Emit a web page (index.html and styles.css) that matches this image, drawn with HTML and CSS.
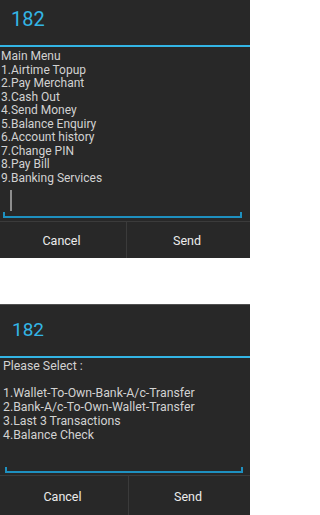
FILE: index.html
```html
<!DOCTYPE html>
<html>
<head>
<meta charset="utf-8">
<link rel="stylesheet" href="styles.css">
</head>
<body>
<div class="page">
  <section class="dialog dialog-main">
    <div class="title">182</div>
    <div class="title-rule"></div>
    <div class="message">
      <div>Main Menu</div>
      <div>1.Airtime Topup</div>
      <div>2.Pay Merchant</div>
      <div>3.Cash Out</div>
      <div>4.Send Money</div>
      <div>5.Balance Enquiry</div>
      <div>6.Account history</div>
      <div>7.Change PIN</div>
      <div>8.Pay Bill</div>
      <div>9.Banking Services</div>
    </div>
    <div class="input"><span class="cursor"></span></div>
    <div class="buttons">
      <div class="btn">Cancel</div>
      <div class="btn">Send</div>
    </div>
  </section>
  <div class="gap"></div>
  <section class="dialog dialog-sub">
    <div class="title">182</div>
    <div class="title-rule"></div>
    <div class="message">
      <div>Please Select :</div>
      <div>&nbsp;</div>
      <div>1.Wallet-To-Own-Bank-A/c-Transfer</div>
      <div>2.Bank-A/c-To-Own-Wallet-Transfer</div>
      <div>3.Last 3 Transactions</div>
      <div>4.Balance Check</div>
    </div>
    <div class="input"></div>
    <div class="buttons">
      <div class="btn">Cancel</div>
      <div class="btn">Send</div>
    </div>
  </section>
</div>
</body>
</html>
```
FILE: styles.css
```css
html, body {
  margin: 0;
  padding: 0;
  background: #ffffff;
}
.page {
  width: 250px;
  display: flex;
  flex-direction: column;
  font-family: Roboto, "Liberation Sans", sans-serif;
}
.dialog {
  background: #282828;
  display: flex;
  flex-direction: column;
}
.title {
  color: #33b5e5;
  font-size: 20px;
  line-height: 24px;
  box-sizing: border-box;
  height: 45px;
  padding: 7px 0 0 11px;
}
.title-rule {
  height: 2px;
  background: #33b5e5;
}
.message {
  color: #d2d2d2;
  font-size: 12px;
  line-height: 13.5px;
  padding: 3px 0 0 1px;
  white-space: nowrap;
}
.input {
  position: relative;
  height: 31px;
  margin: 0 8px 0 3px;
  border-bottom: 2px solid #1e90c0;
}
.input::before,
.input::after {
  content: "";
  position: absolute;
  bottom: 0;
  width: 2px;
  height: 4px;
  background: #1e90c0;
}
.input::before { left: 0; }
.input::after { right: 0; }
.cursor {
  position: absolute;
  left: 7px;
  top: 5px;
  width: 1.5px;
  height: 21px;
  background: #8e8e8e;
}
.buttons {
  display: grid;
  grid-template-columns: 126px 1px 1fr;
  border-top: 1px solid #3b3b3b;
  margin-top: 3px;
  height: 36px;
}
.buttons .btn:first-child {
  border-right: 1px solid #3b3b3b;
  grid-column: 1 / 3;
}
.btn {
  color: #ececec;
  font-size: 12.5px;
  display: flex;
  align-items: center;
  justify-content: center;
  padding-right: 3px;
}
.gap {
  height: 46px;
}
.dialog-sub {
  border-top: 1px solid #505050;
  height: 213px;
  box-sizing: border-box;
}
.dialog-sub .title {
  height: 51px;
  font-size: 19px;
  padding: 13px 0 0 12px;
}
.dialog-sub .message {
  padding: 2px 0 0 3px;
  font-size: 12.3px;
  line-height: 13.7px;
}
.dialog-sub .input {
  height: 29px;
  margin: 0 7px 0 5px;
}
.dialog-sub .buttons {
  flex: 1;
  height: auto;
  margin-top: 2px;
  grid-template-columns: 128px 1px 1fr;
}
```
